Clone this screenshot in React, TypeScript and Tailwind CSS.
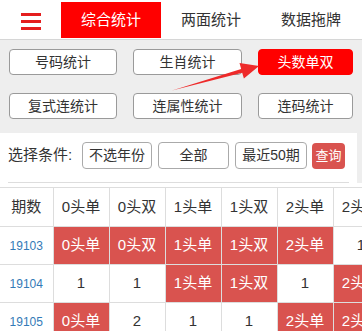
const RED = "bg-[#d9534f] text-white"

const headers = ["期数", "0头单", "0头双", "1头单", "1头双", "2头单", "2头双"]

const rows = [
  { no: "19103", cells: [["0头单", true], ["0头双", true], ["1头单", true], ["1头双", true], ["2头单", true], ["1", false]] },
  { no: "19104", cells: [["1", false], ["1", false], ["1头单", true], ["1头双", true], ["1", false], ["2头双", true]] },
  { no: "19105", cells: [["0头单", true], ["2", false], ["1", false], ["1", false], ["2头单", true], ["2头双", true]] },
]

function NavButton({ label, width, active }: { label: string; width: string; active?: boolean }) {
  return (
    <button
      className={`${width} h-[26px] rounded-[4px] border text-[14px] leading-none ${
        active ? "bg-[#ff0000] border-[#ff0000] text-white" : "bg-white border-[#9a9a9a] text-[#333]"
      }`}
    >
      {label}
    </button>
  )
}

export default function App() {
  return (
    <div
      className="relative w-[362px] h-[331px] overflow-hidden bg-[#eeeeee]"
      style={{ fontFamily: '"Liberation Sans", "Noto Sans CJK SC", sans-serif' }}
    >
      {/* top tabs */}
      <div className="flex h-[40px] bg-white border-b border-[#d6d6d6] pt-[2px]">
        <div className="w-[61px] flex flex-col items-center pt-[11px] gap-[4px]">
          <div className="w-[20px] h-[3px] bg-[#e41e1e]" />
          <div className="w-[20px] h-[3px] bg-[#e41e1e]" />
          <div className="w-[20px] h-[3px] bg-[#e41e1e]" />
        </div>
        <div className="w-[100px] h-[36px] bg-[#ff0000] text-white text-[15px] flex items-center justify-center">综合统计</div>
        <div className="w-[100px] h-[36px] text-[#333] text-[15px] flex items-center justify-center">两面统计</div>
        <div className="w-[100px] h-[36px] text-[#333] text-[15px] flex items-center justify-center">数据拖牌</div>
      </div>

      {/* sub nav */}
      <div className="flex flex-col gap-[18px] pt-[9px] pl-[9px] h-[93px]">
        <div className="flex gap-[16px]">
          <NavButton label="号码统计" width="w-[108px]" />
          <NavButton label="生肖统计" width="w-[109px]" />
          <NavButton label="头数单双" width="w-[95px]" active />
        </div>
        <div className="flex gap-[16px]">
          <NavButton label="复式连统计" width="w-[108px]" />
          <NavButton label="连属性统计" width="w-[109px]" />
          <NavButton label="连码统计" width="w-[95px]" />
        </div>
      </div>

      {/* filter */}
      <div className="w-[357px] bg-white pt-[9px] px-[8px]">
        <div className="flex items-center h-[27px] text-[#333]">
          <span className="w-[74px] text-[15px] whitespace-nowrap">选择条件:</span>
          <button className="w-[70px] h-[27px] border border-[#aaa] rounded-[4px] text-[14px] bg-white">不选年份</button>
          <button className="w-[71px] h-[27px] border border-[#aaa] rounded-[4px] text-[14px] bg-white ml-[6px]">全部</button>
          <button className="w-[72px] h-[27px] border border-[#aaa] rounded-[4px] text-[14px] bg-white ml-[6px]">最近50期</button>
          <button className="w-[33px] h-[26px] rounded-[4px] text-[13px] bg-[#d9534f] text-white ml-[5px]">查询</button>
        </div>
        <div className="mt-[13px] h-px bg-[#dddddd]" />
      </div>

      {/* table */}
      <div className="bg-white pt-[4px] w-[362px] overflow-hidden">
        <table className="w-[389px] min-w-[389px] border-collapse table-fixed text-[15px] text-[#333]">
          <colgroup>
            <col className="w-[53px]" />
            <col className="w-[56px]" />
            <col className="w-[56px]" />
            <col className="w-[56px]" />
            <col className="w-[56px]" />
            <col className="w-[56px]" />
            <col className="w-[56px]" />
          </colgroup>
          <thead>
            <tr className="h-[39px]">
              {headers.map((h, i) => (
                <th
                  key={h}
                  className={`border border-[#dddddd] font-normal text-center p-0 whitespace-nowrap ${i === 0 ? "border-l-0" : ""}`}
                >
                  {h}
                </th>
              ))}
            </tr>
          </thead>
          <tbody>
            {rows.map((r) => (
              <tr key={r.no} className="h-[38px]">
                <td className="border border-l-0 border-[#dddddd] text-center text-[12px] text-[#337ab7] p-0">
                  {r.no}
                </td>
                {r.cells.map(([v, hot], j) => (
                  <td key={j} className={`border border-[#dddddd] text-center p-0 whitespace-nowrap ${hot ? RED : "bg-white"}`}>
                    {v}
                  </td>
                ))}
              </tr>
            ))}
          </tbody>
        </table>
      </div>

      {/* annotation arrow */}
      <svg className="absolute left-0 top-0 pointer-events-none" width="362" height="331">
        <polygon
          points="172,90.5 241.2,68.9 239.5,63.1 259,66 243.9,78.5 242.2,72.7"
          fill="#ee2a2a"
        />
      </svg>
    </div>
  )
}
